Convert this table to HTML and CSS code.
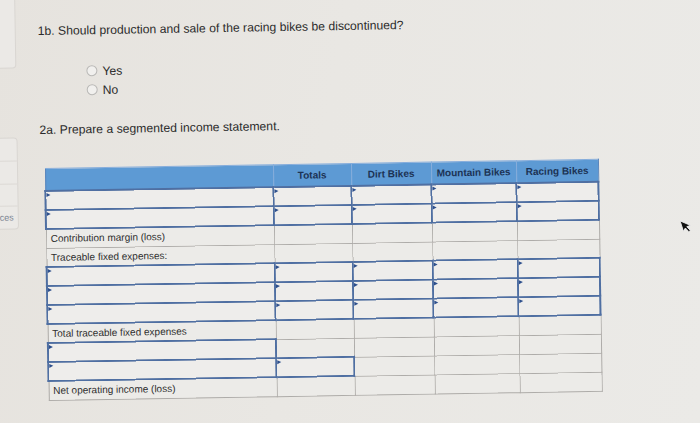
FILE: index.html
```html
<!DOCTYPE html>
<html>
<head>
<meta charset="utf-8">
<link rel="stylesheet" href="styles.css">
</head>
<body>
<div class="page">
  <aside class="side">
    <div class="card card-top"></div>
    <div class="card card-nav">
      <div class="nav-item"></div>
      <div class="nav-item"></div>
      <div class="nav-item"></div>
      <div class="nav-item nav-text">ces</div>
    </div>
  </aside>
  <main class="main">
    <p class="q">1b. Should production and sale of the racing bikes be discontinued?</p>
    <div class="radios">
      <label class="radio"><span class="dot"></span>Yes</label>
      <label class="radio"><span class="dot"></span>No</label>
    </div>
    <p class="q q2">2a. Prepare a segmented income statement.</p>
    <table class="stmt">
      <colgroup>
        <col class="c-label"><col class="c-tot"><col class="c-dirt"><col class="c-mtn"><col class="c-race">
      </colgroup>
      <thead>
        <tr class="head">
          <th></th><th>Totals</th><th>Dirt Bikes</th><th>Mountain Bikes</th><th>Racing Bikes</th>
        </tr>
      </thead>
      <tbody>
        <tr><td class="in"></td><td class="in"></td><td class="in"></td><td class="in"></td><td class="in"></td></tr>
        <tr><td class="in"></td><td class="in"></td><td class="in"></td><td class="in"></td><td class="in"></td></tr>
        <tr><td class="lbl">Contribution margin (loss)</td><td></td><td></td><td></td><td></td></tr>
        <tr><td class="lbl">Traceable fixed expenses:</td><td></td><td></td><td></td><td></td></tr>
        <tr><td class="in"></td><td class="in"></td><td class="in"></td><td class="in"></td><td class="in"></td></tr>
        <tr><td class="in"></td><td class="in"></td><td class="in"></td><td class="in"></td><td class="in"></td></tr>
        <tr><td class="in"></td><td class="in"></td><td class="in"></td><td class="in"></td><td class="in"></td></tr>
        <tr><td class="lbl">Total traceable fixed expenses</td><td></td><td></td><td></td><td></td></tr>
        <tr><td class="in"></td><td></td><td></td><td></td><td></td></tr>
        <tr><td class="in"></td><td class="in"></td><td></td><td></td><td></td></tr>
        <tr class="last"><td class="lbl">Net operating income (loss)</td><td></td><td></td><td></td><td></td></tr>
      </tbody>
    </table>
  </main>
</div>
<svg class="cursor" width="12" height="16" viewBox="0 0 12 16">
  <path d="M1 1 L1 12 L3.8 9.4 L6 14 L7.8 13.2 L5.6 8.6 L9.4 8.4 Z" fill="#111" stroke="#eee" stroke-width="0.8"/>
</svg>
</body>
</html>
```

FILE: styles.css
```css
html, body {
  margin: 0;
  padding: 0;
}
body {
  width: 700px;
  height: 423px;
  overflow: hidden;
  background: linear-gradient(100deg, #e6e3de 0%, #e9e7e3 45%, #ebeae7 100%);
  font-family: "Liberation Sans", Arial, sans-serif;
  color: #2e2e2e;
  position: relative;
}
.page {
  display: flex;
  width: 700px;
  height: 423px;
  transform: rotate(-0.95deg);
  transform-origin: 44px 168px;
}
.side {
  width: 18px;
  flex-shrink: 0;
  display: flex;
  flex-direction: column;
}
.card {
  background: #ebe9e6;
  border: 1px solid #d9d6d2;
  border-radius: 4px;
  margin-left: -8px;
}
.card-top {
  height: 72px;
  margin-top: -6px;
}
.card-nav {
  margin-top: 69px;
  height: 90px;
  display: flex;
  flex-direction: column;
}
.nav-item {
  flex: 1;
  border-bottom: 1px solid #dcd9d5;
}
.nav-item:last-child {
  border-bottom: none;
}
.nav-text {
  font-size: 9px;
  color: #7d8593;
  padding-left: 6px;
  display: flex;
  align-items: center;
}
.main {
  flex: 1;
  padding: 24px 0 0 22px;
}
.q {
  margin: 0;
  font-size: 12.2px;
  line-height: 15px;
  color: #2b2b2b;
}
.radios {
  margin: 23px 0 0 48px;
  display: flex;
  flex-direction: column;
}
.radio {
  display: flex;
  align-items: center;
  gap: 5px;
  height: 19px;
  font-size: 12.2px;
  color: #2b2b2b;
}
.dot {
  width: 9px;
  height: 9px;
  border: 1px solid #b9b8b6;
  border-radius: 50%;
  background: #f1f0ee;
}
.q2 {
  margin-top: 23px;
}
.stmt {
  margin: 30px 0 0 4px;
  border-collapse: collapse;
  table-layout: fixed;
  width: 553px;
  font-size: 10px;
}
.c-label { width: 228px; }
.c-tot { width: 78px; }
.c-dirt { width: 80px; }
.c-mtn { width: 85px; }
.c-race { width: 82px; }
.head th {
  height: 21px;
  padding: 0;
  background: #5d9ad4;
  border: 1px solid #86addb;
  color: #1c3355;
  font-weight: bold;
  font-size: 10px;
  line-height: 12px;
  text-align: center;
  vertical-align: middle;
}
.head th:first-child {
  border-left-color: #5c86bb;
}
.head th:last-child {
  border-right-color: #5c86bb;
}
.stmt tbody tr {
  height: 19px;
}
.stmt td {
  height: 17px;
  padding: 0;
  line-height: 12px;
  border: 1px solid #aeaca9;
  background: #ecebe8;
  position: relative;
}
.stmt td.in {
  border: 2px solid #4f6fa2;
  background: #eeedeb;
}
.stmt td.in::before {
  content: "";
  position: absolute;
  left: 0;
  top: 1px;
  border-left: 4px solid #2d4f8c;
  border-top: 2.5px solid transparent;
  border-bottom: 2.5px solid transparent;
}
.stmt td.lbl {
  padding: 3px 0 0 4px;
  height: 14px;
  color: #2f2f2f;
  white-space: nowrap;
  vertical-align: top;
}
.cursor {
  position: absolute;
  left: 681px;
  top: 218px;
  transform: rotate(-18deg);
}
```
